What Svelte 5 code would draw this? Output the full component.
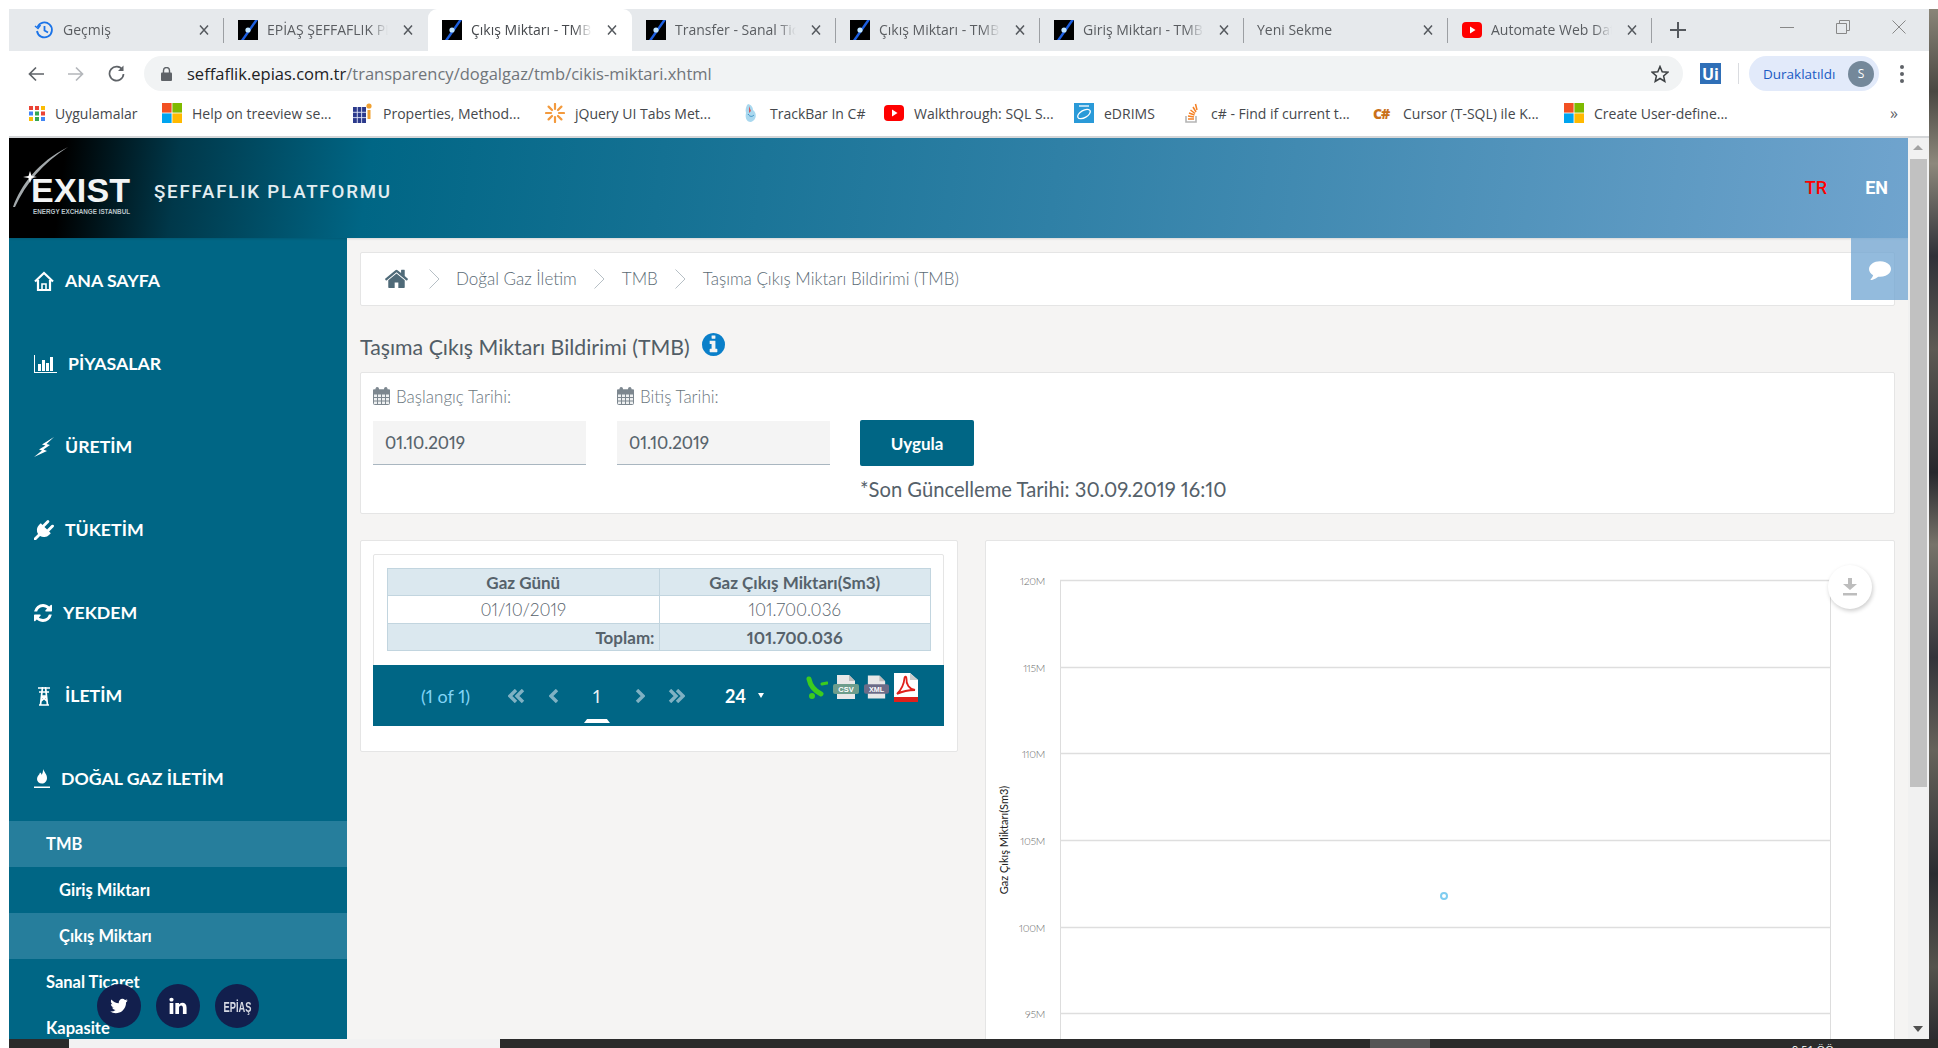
<script>
  const tabs = [
    { title: 'Geçmiş', icon: 'history', sep: true },
    { title: 'EPİAŞ ŞEFFAFLIK PLATFORMU', icon: 'epias' },
    { title: 'Çıkış Miktarı - TMB', icon: 'epias', active: true },
    { title: 'Transfer - Sanal Ticaret', icon: 'epias', sep: true },
    { title: 'Çıkış Miktarı - TMB', icon: 'epias', sep: true },
    { title: 'Giriş Miktarı - TMB', icon: 'epias', sep: true },
    { title: 'Yeni Sekme', icon: '', sep: true },
    { title: 'Automate Web Data', icon: 'yt', sep: true }
  ];

  const bookmarks = [
    { text: 'Uygulamalar', icon: 'apps', w: 133 },
    { text: 'Help on treeview se...', icon: 'ms', w: 191 },
    { text: 'Properties, Method...', icon: 'props', w: 192 },
    { text: 'jQuery UI Tabs Met...', icon: 'jq', w: 195 },
    { text: 'TrackBar In C#', icon: 'drop', w: 144 },
    { text: 'Walkthrough: SQL S...', icon: 'yt', w: 190 },
    { text: 'eDRIMS', icon: 'edrims', w: 107 },
    { text: 'c# - Find if current t...', icon: 'so', w: 192 },
    { text: 'Cursor (T-SQL) ile K...', icon: 'cs', w: 191 },
    { text: 'Create User-define...', icon: 'ms', w: 300 }
  ];

  const navItems = [
    { text: 'ANA SAYFA', icon: 'home' },
    { text: 'PİYASALAR', icon: 'chart' },
    { text: 'ÜRETİM', icon: 'bolt' },
    { text: 'TÜKETİM', icon: 'plug' },
    { text: 'YEKDEM', icon: 'refresh' },
    { text: 'İLETİM', icon: 'tower' },
    { text: 'DOĞAL GAZ İLETİM', icon: 'flame' }
  ];

  const subItems = [
    { text: 'TMB', light: true },
    { text: 'Giriş Miktarı', deep: true },
    { text: 'Çıkış Miktarı', deep: true, light: true },
    { text: 'Sanal Ticaret' },
    { text: 'Kapasite' }
  ];

  const gridLines = [
    { y: 39, label: '120M' },
    { y: 126, label: '115M' },
    { y: 212, label: '110M' },
    { y: 299, label: '105M' },
    { y: 386, label: '100M' },
    { y: 472, label: '95M' }
  ];
</script>

{#snippet favicon(name)}
  {#if name === 'epias'}
    <svg class="fav" viewBox="0 0 20 20">
      <rect width="20" height="20" fill="#000" />
      <path d="M3 20 L17 0 L20 0 L6 20 Z" fill="#1d5fe0" />
      <circle cx="10" cy="10" r="2.6" fill="#bfe4ff" />
    </svg>
  {:else if name === 'history'}
    <svg class="fav" viewBox="0 0 20 20" fill="none" stroke="#1a73e8" stroke-width="1.8">
      <path d="M3.5 7 A7.5 7.5 0 1 1 3 11" />
      <path d="M1 6 L4 8.5 L6.5 5" stroke-width="1.5" />
      <path d="M10.5 6 V10.5 L14 12.5" />
    </svg>
  {:else if name === 'yt'}
    <svg class="fav" viewBox="0 0 20 20">
      <rect x="0" y="2" width="20" height="16" rx="4" fill="#f00" />
      <path d="M8 6.5 L13.5 10 L8 13.5 Z" fill="#fff" />
    </svg>
  {:else if name === 'ms'}
    <svg class="fav" viewBox="0 0 20 20">
      <rect width="9.6" height="9.6" fill="#f25022" />
      <rect x="10.4" width="9.6" height="9.6" fill="#7fba00" />
      <rect y="10.4" width="9.6" height="9.6" fill="#00a4ef" />
      <rect x="10.4" y="10.4" width="9.6" height="9.6" fill="#ffb900" />
    </svg>
  {:else if name === 'apps'}
    <svg class="fav small" viewBox="0 0 16 16">
      <rect x="0" y="1" width="4" height="4" fill="#ea4335" />
      <rect x="6" y="1" width="4" height="4" fill="#ea4335" />
      <rect x="12" y="1" width="4" height="4" fill="#fbbc05" />
      <rect x="0" y="6.5" width="4" height="4" fill="#4285f4" />
      <rect x="6" y="6.5" width="4" height="4" fill="#34a853" />
      <rect x="12" y="6.5" width="4" height="4" fill="#ea4335" />
      <rect x="0" y="12" width="4" height="4" fill="#fbbc05" />
      <rect x="6" y="12" width="4" height="4" fill="#34a853" />
      <rect x="12" y="12" width="4" height="4" fill="#4285f4" />
    </svg>
  {:else if name === 'props'}
    <svg class="fav" viewBox="0 0 20 20">
      <rect x="0" y="4" width="13" height="16" fill="#2c3a8c" />
      <path d="M4.3 4 V20 M8.6 4 V20 M0 9.3 H13 M0 14.6 H13" stroke="#dfe3f5" stroke-width="0.9" />
      <circle cx="16" cy="3" r="2.6" fill="#f0a030" />
      <rect x="14.5" y="7" width="3" height="9" fill="#f0a030" />
    </svg>
  {:else if name === 'jq'}
    <svg class="fav" viewBox="0 0 20 20" stroke="#f39a3d" stroke-width="2.2" stroke-linecap="round">
      <path d="M10 1 V6 M10 14 V19 M1 10 H6 M14 10 H19 M3.6 3.6 L7 7 M13 13 L16.4 16.4 M16.4 3.6 L13 7 M7 13 L3.6 16.4" />
    </svg>
  {:else if name === 'drop'}
    <svg class="fav" viewBox="0 0 20 20">
      <path d="M8 1 C12 2 13 5 13 7 C17 10 17 17 11 19 C6 19 5 14 6 10 C5 7 6 3 8 1 Z" fill="#a9d8ef" />
      <path d="M9 3 L11 8 L9 10 Z" fill="#d35a5a" />
      <path d="M8 11 C10 14 12 14 14 12" stroke="#3d93c6" fill="none" />
    </svg>
  {:else if name === 'edrims'}
    <svg class="fav" viewBox="0 0 20 20">
      <rect width="20" height="20" fill="#2a9ad8" />
      <ellipse cx="10" cy="11" rx="7" ry="3.6" fill="none" stroke="#fff" stroke-width="1.3" transform="rotate(-30 10 11)" />
      <path d="M5 3 H15" stroke="#fff" stroke-width="1.3" />
    </svg>
  {:else if name === 'so'}
    <svg class="fav" viewBox="0 0 20 20" fill="none">
      <path d="M5 13 V19 H15 V13" stroke="#b5b5b5" stroke-width="1.6" />
      <path d="M7 16 H13 M7 13 L13 14 M8 10 L13.5 12 M9.5 7 L14 10.5 M12 4 L15 9 M14.5 1 L16 7" stroke="#f48024" stroke-width="1.5" />
    </svg>
  {:else if name === 'cs'}
    <span class="cs-mark">C#</span>
  {/if}
{/snippet}

{#snippet navIcon(name)}
  {#if name === 'home'}
    <svg class="nav-ico" width="20" height="20" viewBox="0 0 20 20" fill="none" stroke="#fff" stroke-width="2.2">
      <path d="M1 10.5 L10 2 L19 10.5" />
      <path d="M4 9 V19 H16 V9" />
      <path d="M8 19 V13 H12 V19" stroke-width="1.6" />
    </svg>
  {:else if name === 'chart'}
    <svg class="nav-ico" width="23" height="18" viewBox="0 0 23 18" fill="#fff">
      <path d="M0 0 H1 V17 H23 V18 H0 Z" />
      <rect x="4" y="9" width="3" height="7" />
      <rect x="8" y="5" width="3" height="11" />
      <rect x="12" y="8" width="3" height="8" />
      <rect x="16" y="2" width="3" height="14" />
    </svg>
  {:else if name === 'bolt'}
    <svg class="nav-ico" width="20" height="20" viewBox="0 0 20 20" fill="#fff">
      <path d="M20 0 L8 7.5 L11.5 8.5 L5 12.5 L8 13.5 L0 20 L13 14 L9.5 12.5 L16 8 L12.5 7 Z" />
    </svg>
  {:else if name === 'plug'}
    <svg class="nav-ico" width="20" height="20" viewBox="0 0 1792 1792" fill="#fff">
      <path d="M1755 453q37 38 37 90.5t-37 90.5l-401 400 150 150-160 160q-163 163-389.5 186.5t-411.5-100.5l-362 362h-181v-181l362-362q-124-185-100.5-411.5t186.5-389.5l160-160 150 150 400-401q38-37 91-37t90 37 37 90.5-37 90.5l-400 401 234 234 401-400q38-37 91-37t90 37z" />
    </svg>
  {:else if name === 'refresh'}
    <svg class="nav-ico" width="18" height="18" viewBox="128 128 1536 1536" fill="#fff">
      <path d="M1639 1056q0 5-1 7-64 268-268 434.5t-478 166.5q-146 0-282.5-55t-243.5-157l-129 129q-19 19-45 19t-45-19-19-45v-448q0-26 19-45t45-19h448q26 0 45 19t19 45-19 45l-137 137q71 66 161 102t187 36q134 0 250-65t186-179q11-17 53-117 8-23 30-23h192q13 0 22.5 9.5t9.5 22.5zm25-800v448q0 26-19 45t-45 19h-448q-26 0-45-19t-19-45 19-45l138-138q-148-137-349-137-134 0-250 65t-186 179q-11 17-53 117-8 23-30 23h-199q-13 0-22.5-9.5t-9.5-22.5v-7q65-268 270-434.5t480-166.5q146 0 284 55.5t245 156.5l130-129q19-19 45-19t45 19 19 45z" />
    </svg>
  {:else if name === 'tower'}
    <svg class="nav-ico" width="20" height="20" viewBox="0 0 20 20" fill="none" stroke="#fff" stroke-width="1.7">
      <path d="M4 2 H16 M5 6 H15 M8.5 1 L6.5 19 M11.5 1 L13.5 19 M5 19 H15 M7.5 10 H12.5 M7.5 10 L13 15 M12.5 10 L7 15" />
    </svg>
  {:else if name === 'flame'}
    <svg class="nav-ico" width="16" height="20" viewBox="0 0 16 20" fill="#fff">
      <path d="M9 0 C10 3 13 5 13 9 C13 12.5 10.5 14.5 8 14.5 C5 14.5 3 12.5 3 10 C3 7 5.5 6 6 3.5 C7 4 7.5 5 7.5 6 C8.5 4.5 9.2 2.5 9 0 Z" />
      <rect x="0" y="17.5" width="16" height="1.5" />
    </svg>
  {/if}
{/snippet}

{#snippet calendarIcon()}
  <svg class="cal" width="17" height="18" viewBox="0 0 17 18" fill="none" stroke="#7d878f" stroke-width="1">
    <rect x="0.5" y="3" width="16" height="14.5" rx="1" fill="#eef0f1" />
    <path d="M0.5 7 H16.5 M0.5 10.5 H16.5 M0.5 14 H16.5 M4.5 7 V17.5 M8.5 7 V17.5 M12.5 7 V17.5" />
    <rect x="3" y="0.5" width="2.5" height="4.5" rx="1" fill="#7d878f" />
    <rect x="11.5" y="0.5" width="2.5" height="4.5" rx="1" fill="#7d878f" />
    <rect x="0.5" y="3" width="16" height="3.5" fill="#7d878f" />
  </svg>
{/snippet}

{#snippet pagerArrow(d, w)}
  <svg width={w} height="14" viewBox="0 0 {w} 14" fill="none" stroke="#7fb1c3" stroke-width="3.4">
    <path {d} />
  </svg>
{/snippet}

<div class="screen">
  <div class="window">
    <div class="tabstrip">
      {#each tabs as tab}
        <div class="tab" class:active={tab.active} class:sep={tab.sep}>
          {#if tab.icon}{@render favicon(tab.icon)}{/if}
          <span class="tab-title" class:bare={!tab.icon}>{tab.title}</span>
          <svg class="tab-x" width="10" height="10" viewBox="0 0 10 10" stroke="#55595e" stroke-width="1.5">
            <path d="M1 0.5 L9 9.5 M9 0.5 L1 9.5" />
          </svg>
        </div>
      {/each}
      <svg class="plus" width="16" height="16" viewBox="0 0 16 16" stroke="#55595e" stroke-width="2">
        <path d="M8 0 V16 M0 8 H16" />
      </svg>
      <div class="win-btns">
        <div class="win-btn">
          <svg width="14" height="14" viewBox="0 0 14 14" stroke="#888"><path d="M0 7.5 H14" /></svg>
        </div>
        <div class="win-btn">
          <svg width="14" height="14" viewBox="0 0 14 14" fill="none" stroke="#888"><path d="M0.5 3.5 H10.5 V13.5 H0.5 Z M3.5 3.5 V0.5 H13.5 V10.5 H10.5" /></svg>
        </div>
        <div class="win-btn">
          <svg width="14" height="14" viewBox="0 0 14 14" stroke="#888"><path d="M0.5 0.5 L13.5 13.5 M13.5 0.5 L0.5 13.5" /></svg>
        </div>
      </div>
    </div>

    <div class="toolbar">
      <div class="tool">
        <svg width="16" height="16" viewBox="0 0 16 16" fill="none" stroke="#5f6368" stroke-width="1.7"><path d="M16 8 H2 M8 1.5 L1.5 8 L8 14.5" /></svg>
      </div>
      <div class="tool">
        <svg width="16" height="16" viewBox="0 0 16 16" fill="none" stroke="#b4b7bb" stroke-width="1.7"><path d="M0 8 H14 M8 1.5 L14.5 8 L8 14.5" /></svg>
      </div>
      <div class="tool">
        <svg width="17" height="17" viewBox="0 0 17 17" fill="none" stroke="#5f6368" stroke-width="1.7"><path d="M14.5 5 A7 7 0 1 0 15.5 9" /><path d="M15.5 0.5 V6 H10" fill="#5f6368" stroke="none" /></svg>
      </div>
      <div class="omnibox">
        <svg width="11" height="14" viewBox="0 0 11 14" fill="#5f6368"><rect y="5.5" width="11" height="8.5" rx="1" /><path d="M2.5 6 V3.5 A3 3 0 0 1 8.5 3.5 V6" fill="none" stroke="#5f6368" stroke-width="1.4" /></svg>
        <span class="url"><b>seffaflik.epias.com.tr</b>/transparency/dogalgaz/tmb/cikis-miktari.xhtml</span>
        <svg class="star" width="18" height="18" viewBox="0 0 18 18" fill="none" stroke="#3c4043" stroke-width="1.5"><path d="M9 1.5 L11.2 6.7 L16.8 7.2 L12.6 10.9 L13.8 16.4 L9 13.5 L4.2 16.4 L5.4 10.9 L1.2 7.2 L6.8 6.7 Z" /></svg>
      </div>
      <div class="ui-ext">Ui</div>
      <div class="tool-sep"></div>
      <div class="profile">
        <span>Duraklatıldı</span>
        <span class="avatar">S</span>
      </div>
      <div class="dots"><i></i><i></i><i></i></div>
    </div>

    <div class="bookmarks">
      {#each bookmarks as b}
        <div class="bookmark" style:width="{b.w}px">
          {@render favicon(b.icon)}
          <span>{b.text}</span>
        </div>
      {/each}
      <span class="more">»</span>
    </div>

    <div class="viewport">
      <div class="page">
        <header class="site-header">
          <div class="logo">
            <svg class="streak" width="55" height="60" viewBox="0 0 55 60" fill="none">
              <path d="M0 60 C8 38 25 15 55 0 C30 16 13 36 2 60 Z" fill="#d9e2e6" opacity="0.75" />
              <path d="M17 24 L18.5 29 L24 30 L18.5 31 L17 36 L15.5 31 L10 30 L15.5 29 Z" fill="#fff" />
            </svg>
            <div class="logo-word">EXIST</div>
            <div class="logo-sub">ENERGY EXCHANGE ISTANBUL</div>
          </div>
          <div class="platform">ŞEFFAFLIK PLATFORMU</div>
          <div class="langs">
            <span class="lang-on">TR</span>
            <span>EN</span>
          </div>
        </header>

        <div class="page-body">
          <aside class="sidebar">
            {#each navItems as item}
              <div class="nav-item">
                {@render navIcon(item.icon)}
                <span>{item.text}</span>
              </div>
            {/each}
            {#each subItems as sub}
              <div class="sub-item" class:light={sub.light} class:deep={sub.deep}>{sub.text}</div>
            {/each}
            <div class="socials">
              <div class="social">
                <svg width="20" height="20" viewBox="0 0 1792 1792" fill="#fff"><path d="M1684 408q-67 98-162 167 1 14 1 42 0 130-38 259.5t-115.5 248.5-184.5 210.5-258 146-323 54.5q-271 0-496-145 35 4 76 4 225 0 401-138-105-2-188-64.5t-114-159.5q33 5 61 5 43 0 85-11-112-23-185.5-111.5t-73.5-205.5v-4q68 38 146 41-66-44-105-115t-39-154q0-88 44-163 121 149 294.5 238.5t371.5 99.5q-8-38-8-74 0-134 94.5-228.5t228.5-94.5q140 0 236 102 109-21 205-78-37 115-142 178 92-10 184-50z" /></svg>
              </div>
              <div class="social">
                <svg width="20" height="20" viewBox="0 0 1792 1792" fill="#fff"><path d="M477 625v991h-330v-991h330zm21-306q1 73-50.5 122t-135.5 49h-2q-82 0-132-49t-50-122q0-74 51.5-122.5t134.5-48.5 133 48.5 51 122.5zm1166 729v568h-329v-530q0-105-40.5-164.5t-126.5-59.5q-63 0-105.5 34.5t-63.5 85.5q-11 30-11 81v553h-329q2-399 2-647t-1-296l-1-48h329v144h-2q20-32 41-56t56.5-52 87-43.5 114.5-15.5q171 0 275 113.5t104 332.5z" /></svg>
              </div>
              <div class="social"><span class="epias-mark">EPİAŞ</span></div>
            </div>
          </aside>

          <main class="content">
            <div class="card breadcrumb">
              <svg width="23" height="20" viewBox="96 200 1600 1400" fill="#4f6a78"><path d="M1472 992v480q0 26-19 45t-45 19h-384v-384h-256v384h-384q-26 0-45-19t-19-45v-480q0-1 .5-3t.5-3l575-474 575 474q1 2 1 6zm223-69l-62 74q-8 9-21 11h-3q-13 0-21-7l-692-577-692 577q-12 8-24 7-13-2-21-11l-62-74q-8-10-7-23.5t11-21.5l719-599q32-26 76-26t76 26l244 204v-195q0-14 9-23t23-9h192q14 0 23 9t9 23v408l219 182q10 8 11 21.5t-7 23.5z" /></svg>
              {#each ['Doğal Gaz İletim', 'TMB', 'Taşıma Çıkış Miktarı Bildirimi (TMB)'] as crumb, i}
                <svg class="crumb-sep" class:lead={i === 0} width="11" height="20" viewBox="0 0 11 20" fill="none" stroke="#b6bfc5"><path d="M0.5 0.5 L10 10 L0.5 19.5" /></svg>
                <span>{crumb}</span>
              {/each}
            </div>

            <h1 class="page-title">
              Taşıma Çıkış Miktarı Bildirimi (TMB)
              <svg class="info" width="23" height="23" viewBox="128 128 1536 1536" fill="#0a7fc9"><path d="M1152 1376v-160q0-14-9-23t-23-9h-96v-512q0-14-9-23t-23-9h-320q-14 0-23 9t-9 23v160q0 14 9 23t23 9h96v320h-96q-14 0-23 9t-9 23v160q0 14 9 23t23 9h448q14 0 23-9t9-23zm-128-896v-160q0-14-9-23t-23-9h-192q-14 0-23 9t-9 23v160q0 14 9 23t23 9h192q14 0 23-9t9-23zm640 416q0 209-103 385.5t-279.5 279.5-385.5 103-385.5-103-279.5-279.5-103-385.5 103-385.5 279.5-279.5 385.5-103 385.5 103 279.5 279.5 103 385.5z" /></svg>
            </h1>

            <div class="card filter">
              <label class="field">
                <span class="field-label">{@render calendarIcon()} Başlangıç Tarihi:</span>
                <span class="field-input">01.10.2019</span>
              </label>
              <label class="field">
                <span class="field-label">{@render calendarIcon()} Bitiş Tarihi:</span>
                <span class="field-input">01.10.2019</span>
              </label>
              <div class="apply">
                <div class="apply-btn">Uygula</div>
                <p class="updated">*Son Güncelleme Tarihi: 30.09.2019 16:10</p>
              </div>
            </div>

            <div class="results">
              <div class="card table-card">
                <div class="table-inner">
                  <table>
                    <thead>
                      <tr><th>Gaz Günü</th><th>Gaz Çıkış Miktarı(Sm3)</th></tr>
                    </thead>
                    <tbody>
                      <tr><td>01/10/2019</td><td>101.700.036</td></tr>
                    </tbody>
                    <tfoot>
                      <tr><td class="total-label">Toplam:</td><td>101.700.036</td></tr>
                    </tfoot>
                  </table>
                  <div class="paginator">
                    <span class="report">(1 of 1)</span>
                    <span class="pg first">{@render pagerArrow('M8 1 L2 7 L8 13 M15 1 L9 7 L15 13', 17)}</span>
                    <span class="pg">{@render pagerArrow('M8 1 L2 7 L8 13', 10)}</span>
                    <span class="pg num">1</span>
                    <span class="pg">{@render pagerArrow('M2 1 L8 7 L2 13', 10)}</span>
                    <span class="pg">{@render pagerArrow('M2 1 L8 7 L2 13 M9 1 L15 7 L9 13', 17)}</span>
                    <span class="rows">24</span>
                    <span class="caret"></span>
                    <div class="exports">
                      <svg width="23" height="23" viewBox="0 0 23 23" fill="none" stroke="#3ccc1e" stroke-linecap="round">
                        <path d="M4 3 C5 8 8 14 16 18" stroke-width="5" />
                        <path d="M17 8 L22 7" stroke-width="3" />
                        <circle cx="7" cy="20" r="1.5" stroke-width="3" />
                      </svg>
                      <svg width="26" height="25" viewBox="0 0 26 25">
                        <path d="M4 0 H16 L22 6 V24 H4 Z" fill="#e8e8e8" />
                        <path d="M16 0 V6 H22 Z" fill="#bbb" />
                        <rect x="0" y="9" width="26" height="10" rx="2" fill="#6d9d8c" />
                        <text x="13" y="17" class="file-tag">CSV</text>
                      </svg>
                      <svg width="25" height="25" viewBox="0 0 26 25">
                        <path d="M4 0 H16 L22 6 V24 H4 Z" fill="#e8e8e8" />
                        <path d="M16 0 V6 H22 Z" fill="#bbb" />
                        <rect x="0" y="9" width="26" height="10" rx="2" fill="#6c6c88" />
                        <text x="13" y="17" class="file-tag">XML</text>
                      </svg>
                      <svg width="24" height="29" viewBox="0 0 24 29">
                        <path d="M0 0 H16 L24 7 V29 H0 Z" fill="#fff" />
                        <path d="M16 0 V7 H24 Z" fill="#ccc" />
                        <path d="M3 21 C7 17 10 11 10.5 5 C11 3 12.5 3 12.5 6 C12 11 15 16 21 17 C16 17 9 18 3 21 Z" fill="none" stroke="#e0201b" stroke-width="1.8" />
                        <rect y="24" width="24" height="5" fill="#e0201b" />
                      </svg>
                    </div>
                    <span class="pg-mark"></span>
                  </div>
                </div>
              </div>

              <div class="card chart-card">
                <svg class="chart" width="907" height="499" viewBox="0 0 907 499">
                  <text class="axis-title" transform="translate(22 299) rotate(-90)">Gaz Çıkış Miktarı(Sm3)</text>
                  <path d="M74.5 39 V499 M844.5 39 V499" stroke="#ddd" fill="none" />
                  {#each gridLines as line}
                    <path d="M74 {line.y}.5 H845" stroke="#dedede" stroke-width="1.5" />
                    <text class="tick" x="59" y={line.y + 5}>{line.label}</text>
                  {/each}
                  <circle cx="458" cy="355" r="3" fill="#fff" stroke="#7fcdf0" stroke-width="2" />
                </svg>
                <div class="chart-dl">
                  <svg width="14" height="18" viewBox="0 0 14 18" fill="#bdbdbd"><path d="M5 0 H9 V6 H14 L7 12 L0 6 H5 Z" /><rect y="15" width="14" height="2.5" /></svg>
                </div>
              </div>
            </div>
          </main>
        </div>

        <div class="chat-tab">
          <svg width="22" height="22" viewBox="0 0 1792 1792" fill="#fff"><path d="M1792 896q0 174-120 321.5t-326 233-450 85.5q-70 0-145-8-198 175-460 242-49 14-114 22-17 2-30.5-9t-17.5-29v-1q-3-4-.5-12t2-10 4.5-9.5l6-9 7-8.5 8-9q7-8 31-34.5t34.5-38 31-39.5 32.5-51 27-59 26-76q-157-89-247.5-220t-90.5-281q0-130 71-248.5t191-204.5 286-136.5 348-50.5q244 0 450 85.5t326 233 120 321.5z" /></svg>
        </div>
      </div>

      <div class="scrollbar">
        <span class="arrow up"></span>
        <div class="thumb"></div>
        <span class="arrow down"></span>
      </div>
    </div>
  </div>

  <div class="wallpaper"></div>

  <div class="taskbar">
    <div class="task-light"></div>
    <div class="task-hl"></div>
    <span class="task-clock">9:51 ÖÖ</span>
  </div>
</div>

<style>
  :global(body) {
    margin: 0;
    background: #fff;
    overflow: hidden;
  }

  .screen {
    width: 1938px;
    height: 1048px;
    box-sizing: border-box;
    padding: 9px 0 0 9px;
    display: grid;
    grid-template-columns: 1920px 9px;
    grid-template-rows: 1030px 9px;
    overflow: hidden;
    font-family: "Lato", sans-serif;
    font-variant-numeric: proportional-nums;
  }

  .window {
    display: flex;
    flex-direction: column;
    min-height: 0;
    min-width: 0;
  }

  /* browser chrome */
  .tabstrip {
    height: 42px;
    background: #e6e9ec;
    display: flex;
    align-items: stretch;
    padding-left: 11px;
    font-family: "Open Sans", sans-serif;
    font-size: 14px;
    color: #5a5d61;
    flex: none;
  }

  .tab {
    width: 204px;
    box-sizing: border-box;
    display: flex;
    align-items: center;
    padding: 0 15px 0 14px;
    position: relative;
  }

  .tab.sep::after {
    content: "";
    position: absolute;
    right: 0;
    top: 9px;
    height: 25px;
    width: 1px;
    background: #9c9fa3;
  }

  .tab.active {
    background: #fff;
    border-radius: 9px 9px 0 0;
    color: #45484c;
  }

  .fav {
    width: 20px;
    height: 20px;
    flex: none;
  }

  .fav.small {
    width: 16px;
    height: 16px;
  }

  .tab-title {
    flex: 1;
    margin: 0 15px 0 9px;
    padding-bottom: 1px;
    white-space: nowrap;
    overflow: hidden;
    -webkit-mask-image: linear-gradient(90deg, #000 85%, transparent);
    mask-image: linear-gradient(90deg, #000 85%, transparent);
  }

  .tab-title.bare {
    margin-left: -1px;
  }

  .tab-x {
    flex: none;
  }

  .plus {
    align-self: center;
    margin-left: 18px;
  }

  .win-btns {
    margin-left: auto;
    display: flex;
    padding-right: 2px;
  }

  .win-btn {
    width: 56px;
    display: flex;
    align-items: center;
    justify-content: center;
    padding-bottom: 6px;
  }

  .toolbar {
    height: 45px;
    display: flex;
    align-items: center;
    padding-left: 7px;
    background: #fff;
    flex: none;
  }

  .tool {
    width: 40px;
    display: flex;
    justify-content: center;
  }

  .omnibox {
    margin-left: 8px;
    width: 1539px;
    height: 35px;
    border-radius: 18px;
    background: #f1f3f4;
    display: flex;
    align-items: center;
    padding: 0 14px 0 17px;
    box-sizing: border-box;
  }

  .url {
    margin-left: 15px;
    font-family: "Open Sans", sans-serif;
    font-size: 16.5px;
    color: #70757a;
  }

  .url b {
    font-weight: 400;
    color: #202124;
  }

  .star {
    margin-left: auto;
  }

  .ui-ext {
    margin-left: 17px;
    width: 21px;
    height: 21px;
    background: #2f6fb7;
    color: #fff;
    font: 700 16px "Open Sans", sans-serif;
    display: flex;
    align-items: center;
    justify-content: center;
  }

  .tool-sep {
    width: 1px;
    height: 21px;
    background: #dadce0;
    margin: 0 10px 0 17px;
  }

  .profile {
    width: 130px;
    height: 35px;
    border-radius: 18px;
    background: #e2eafa;
    color: #1a5bc4;
    font: 13.5px "Open Sans", sans-serif;
    display: flex;
    align-items: center;
    justify-content: space-between;
    padding: 0 5px 0 14px;
    box-sizing: border-box;
  }

  .avatar {
    width: 26px;
    height: 26px;
    border-radius: 50%;
    background: #74889a;
    color: #fff;
    font-size: 12px;
    display: flex;
    align-items: center;
    justify-content: center;
  }

  .dots {
    margin-left: 21px;
    display: flex;
    flex-direction: column;
    gap: 3px;
  }

  .dots i {
    width: 4px;
    height: 4px;
    border-radius: 50%;
    background: #5f6368;
  }

  .bookmarks {
    height: 42px;
    padding: 0 0 6px 20px;
    box-sizing: border-box;
    display: flex;
    align-items: center;
    background: #fff;
    border-bottom: 2px solid #d4d6d8;
    font: 14px "Open Sans", sans-serif;
    color: #45484c;
    position: relative;
    flex: none;
  }

  .bookmark {
    display: flex;
    align-items: center;
    gap: 10px;
    white-space: nowrap;
    flex: none;
  }

  .cs-mark {
    width: 20px;
    font: 800 14px "Open Sans", sans-serif;
    color: #c9701a;
    letter-spacing: -1px;
  }

  .more {
    margin-left: auto;
    margin-right: 31px;
    font-size: 16px;
    color: #5f6368;
  }

  .viewport {
    flex: 1;
    min-height: 0;
    display: flex;
  }

  /* page */
  .page {
    width: 1899px;
    flex: none;
    display: flex;
    flex-direction: column;
    position: relative;
    background: #f5f4f3;
    overflow: hidden;
  }

  .site-header {
    height: 100px;
    flex: none;
    display: flex;
    align-items: center;
    background: linear-gradient(97deg, #000 3%, #00384a 9%, #006685 19%, #2f80a6 55%, #70a4ce 100%);
    color: #fff;
    position: relative;
    z-index: 1;
    box-shadow: 0 1px 2px rgba(0, 0, 0, 0.12);
  }

  .logo {
    position: relative;
    margin-left: 22px;
    width: 99px;
    padding-top: 12px;
  }

  .streak {
    position: absolute;
    left: -18px;
    top: -13px;
  }

  .logo-word {
    font: 700 34px/36px "Liberation Sans", sans-serif;
    letter-spacing: 0.2px;
    color: #f2f4f5;
  }

  .logo-sub {
    font: 700 6.3px/8px "Liberation Sans", sans-serif;
    color: #b8c3c8;
    white-space: nowrap;
    padding-left: 2px;
  }

  .platform {
    margin-left: 24px;
    font: 500 18.7px "Roboto", sans-serif;
    letter-spacing: 1.8px;
    color: #e3edf1;
    padding-top: 8px;
  }

  .langs {
    margin-left: auto;
    margin-right: 20px;
    display: flex;
    gap: 38px;
    font: 700 18px "Roboto", sans-serif;
    padding-bottom: 2px;
  }

  .lang-on {
    color: #f00;
    font-weight: 500;
  }

  .page-body {
    flex: 1;
    min-height: 0;
    display: flex;
  }

  .sidebar {
    width: 338px;
    flex: none;
    background: #006685;
    color: #fff;
    padding-top: 2px;
    box-sizing: border-box;
    position: relative;
    overflow: hidden;
  }

  .nav-item {
    height: 83px;
    box-sizing: border-box;
    padding: 0 0 2px 25px;
    display: flex;
    align-items: center;
    gap: 11px;
    font-size: 17.7px;
    font-weight: 700;
  }

  .sub-item {
    height: 46px;
    padding-left: 37px;
    display: flex;
    align-items: center;
    font-size: 16.5px;
    font-weight: 700;
  }

  .sub-item.deep {
    padding-left: 50px;
  }

  .sub-item.light {
    background: #267e9c;
  }

  .socials {
    position: absolute;
    left: 88px;
    top: 746px;
    display: flex;
    gap: 15px;
  }

  .social {
    width: 44px;
    height: 44px;
    border-radius: 50%;
    background: #121f4d;
    display: flex;
    align-items: center;
    justify-content: center;
  }

  .epias-mark {
    font: 700 15px "Liberation Sans", sans-serif;
    color: #d7dae4;
    transform: scaleX(0.62);
  }

  .content {
    flex: 1;
    min-width: 0;
    padding: 14px 13px 0;
    overflow: hidden;
    color: #5d6a73;
  }

  .card {
    background: #fff;
    border: 1px solid #e5e5e5;
    border-radius: 2px;
    box-sizing: border-box;
  }

  .breadcrumb {
    height: 54px;
    display: flex;
    align-items: center;
    padding: 0 0 1px 24px;
    font-size: 17px;
    font-weight: 300;
    color: #5b6b75;
  }

  .crumb-sep {
    margin: 0 17px;
    flex: none;
  }

  .crumb-sep.lead {
    margin: 0 16px 0 21px;
  }

  .page-title {
    height: 66px;
    margin: 0;
    display: flex;
    align-items: center;
    gap: 12px;
    font-size: 21.3px;
    font-weight: 400;
    color: #525d66;
    padding-top: 16px;
    box-sizing: border-box;
  }

  .info {
    margin-bottom: 6px;
  }

  .filter {
    height: 142px;
    display: flex;
    gap: 31px;
    padding: 11px 0 0 12px;
  }

  .field {
    width: 213px;
    display: flex;
    flex-direction: column;
  }

  .field-label {
    height: 24px;
    display: flex;
    align-items: center;
    gap: 6px;
    font-size: 17px;
    font-weight: 300;
    color: #6b7780;
    margin-bottom: 13px;
  }

  .field-input {
    height: 44px;
    box-sizing: border-box;
    background: #f4f4f4;
    border-bottom: 1px solid #a9b6c0;
    padding-left: 12px;
    display: flex;
    align-items: center;
    font-size: 17px;
    font-weight: 500;
    color: #59646d;
  }

  .apply {
    margin-top: 36px;
    margin-left: -1px;
  }

  .apply-btn {
    width: 114px;
    height: 46px;
    border-radius: 2px;
    background: #006685;
    color: #fff;
    font-size: 17px;
    font-weight: 700;
    display: flex;
    align-items: center;
    justify-content: center;
  }

  .updated {
    margin: 11px 0 0;
    font-size: 20.2px;
    line-height: 24px;
    color: #55616a;
    white-space: nowrap;
  }

  .results {
    margin-top: 26px;
    display: flex;
    gap: 27px;
    align-items: flex-start;
  }

  .table-card {
    width: 598px;
    height: 212px;
    padding: 13px 13px 0 12px;
    flex: none;
  }

  .table-inner {
    border: 1px solid #e5e5e5;
    border-radius: 2px;
    height: 172px;
    box-sizing: border-box;
    padding: 13px 0 0;
    position: relative;
  }

  table {
    width: 544px;
    margin: 0 13px;
    border-collapse: collapse;
    table-layout: fixed;
    font-size: 17px;
    color: #56626b;
  }

  th,
  td {
    border: 1px solid #c2d5df;
    height: 27px;
    padding: 0 4px;
    text-align: center;
    box-sizing: border-box;
  }

  th,
  tfoot td {
    background: #dbe8ef;
    font-weight: 700;
  }

  tbody td {
    font-weight: 300;
    height: 28px;
  }

  td.total-label {
    text-align: right;
  }

  .paginator {
    position: absolute;
    left: -1px;
    right: -1px;
    bottom: -1px;
    height: 61px;
    background: #006685;
    display: flex;
    align-items: center;
    padding-left: 48px;
    color: #fff;
    font-size: 18px;
  }

  .report {
    width: 52px;
    color: #82d4f7;
    font-weight: 400;
    white-space: nowrap;
  }

  .pg {
    width: 37px;
    display: flex;
    justify-content: center;
  }

  .pg.first {
    margin-left: 25px;
  }

  .pg.num {
    width: 49px;
    font-size: 18px;
    font-weight: 400;
    color: #e9f2f5;
  }

  .rows {
    margin-left: 30px;
    font-size: 18px;
    font-weight: 700;
  }

  .caret {
    margin-left: 12px;
    border-left: 3px solid transparent;
    border-right: 3px solid transparent;
    border-top: 5px solid #fff;
  }

  .exports {
    margin-left: auto;
    margin-right: 26px;
    align-self: flex-start;
    padding-top: 8px;
    display: flex;
    align-items: center;
    gap: 5px;
  }

  .file-tag {
    font: 700 7.5px "Liberation Sans", sans-serif;
    fill: #fff;
    text-anchor: middle;
  }

  .pg-mark {
    position: absolute;
    left: 211px;
    bottom: 3px;
    width: 26px;
    height: 4px;
    background: #fff;
    clip-path: polygon(12% 0, 88% 0, 100% 100%, 0 100%);
  }

  .chart-card {
    flex: 1;
    height: 520px;
    position: relative;
    overflow: hidden;
  }

  .chart {
    display: block;
  }

  .tick {
    font-size: 10.5px;
    font-weight: 300;
    fill: #6b6b6b;
    text-anchor: end;
    letter-spacing: -0.3px;
  }

  .axis-title {
    font-size: 11px;
    fill: #222;
    text-anchor: middle;
  }

  .chart-dl {
    position: absolute;
    left: 842px;
    top: 24px;
    width: 44px;
    height: 44px;
    border-radius: 50%;
    background: #fff;
    box-shadow: 1px 2px 4px rgba(0, 0, 0, 0.2);
    display: flex;
    align-items: center;
    justify-content: center;
  }

  .chat-tab {
    position: absolute;
    left: 1842px;
    top: 100px;
    width: 57px;
    height: 62px;
    background: rgba(111, 164, 209, 0.75);
    display: flex;
    align-items: center;
    justify-content: center;
    z-index: 2;
  }

  /* scrollbar, desktop behind the window */
  .scrollbar {
    width: 21px;
    flex: none;
    background: #f1f1f1;
    position: relative;
  }

  .thumb {
    position: absolute;
    left: 2px;
    right: 2px;
    top: 21px;
    height: 628px;
    background: #c1c1c1;
  }

  .arrow {
    position: absolute;
    left: 5px;
    border-left: 5px solid transparent;
    border-right: 5px solid transparent;
  }

  .arrow.up {
    top: 7px;
    border-bottom: 5px solid #a3a3a3;
  }

  .arrow.down {
    bottom: 7px;
    border-top: 6px solid #505050;
  }

  .wallpaper {
    background: linear-gradient(180deg, #8a8578 0, #4a4842 8%, #8d887c 15%, #2f3138 24%, #5d5a54 33%, #27282d 45%, #77736a 52%, #33343a 63%, #66635b 72%, #2b2c31 84%, #55534d 93%, #2b2b2f 100%);
  }

  .taskbar {
    grid-column: 1 / 3;
    background: #2b2b2b;
    position: relative;
    overflow: hidden;
  }

  .task-light {
    position: absolute;
    left: 60px;
    top: 0;
    width: 431px;
    height: 9px;
    background: #f2f2f2;
  }

  .task-hl {
    position: absolute;
    left: 1361px;
    top: 0;
    width: 60px;
    height: 9px;
    background: #555;
  }

  .task-clock {
    position: absolute;
    left: 1783px;
    top: 4px;
    color: #fff;
    font: 11px/13px "Open Sans", sans-serif;
  }
</style>
